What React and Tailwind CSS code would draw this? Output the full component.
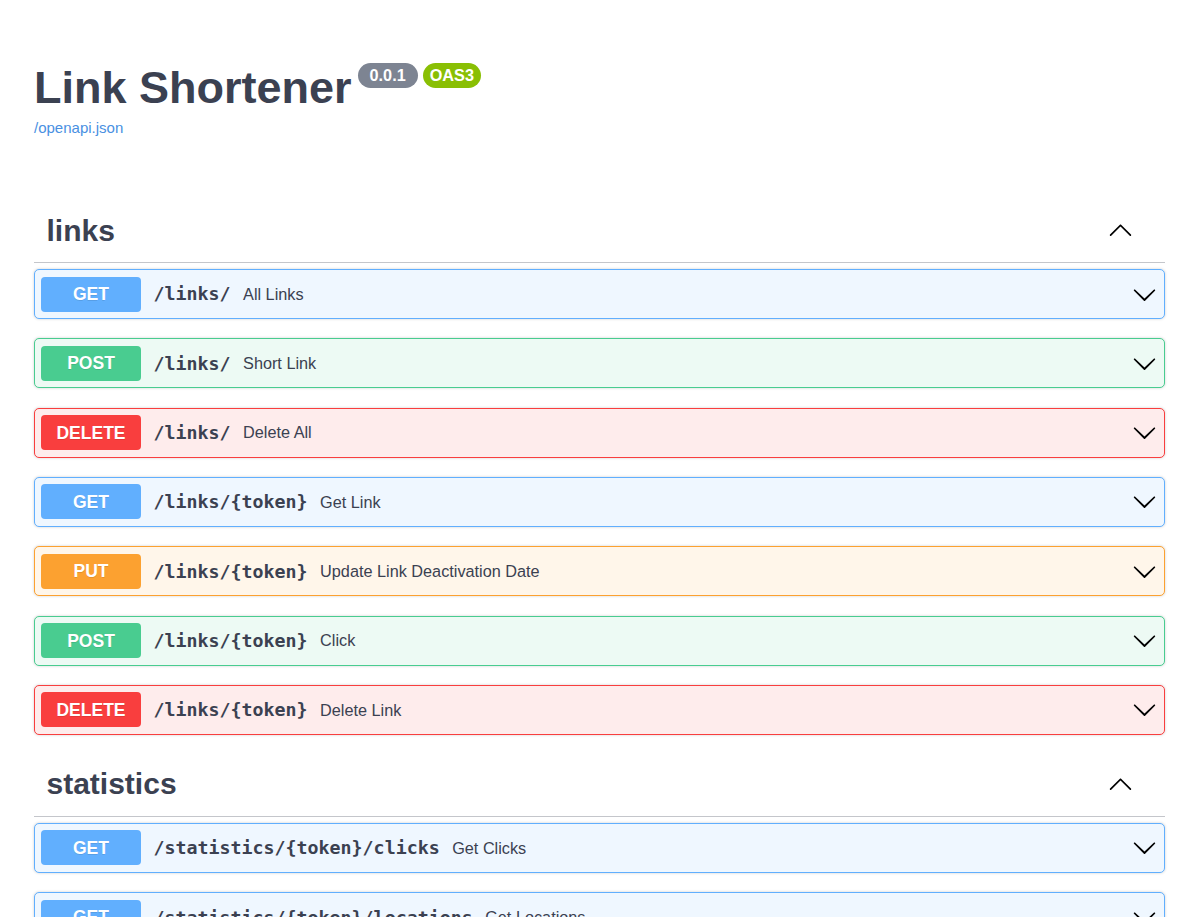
import React from "react";

const METHODS = {
  GET: { row: "bg-[#eff7ff] border-[#61affe]", badge: "bg-[#61affe]" },
  POST: { row: "bg-[#edfaf4] border-[#49cc90]", badge: "bg-[#49cc90]" },
  DELETE: { row: "bg-[#feecec] border-[#f93e3e]", badge: "bg-[#f93e3e]" },
  PUT: { row: "bg-[#fff6ea] border-[#fca130]", badge: "bg-[#fca130]" },
};

function ArrowDown() {
  return (
    <svg width="25" height="25" viewBox="0 0 20 20" className="shrink-0">
      <path
        fill="#000"
        d="M17.418 6.109c.272-.268.709-.268.979 0s.271.701 0 .969l-7.908 7.83c-.27.268-.707.268-.979 0l-7.908-7.83c-.27-.268-.27-.701 0-.969.271-.268.709-.268.979 0L10 13.25l7.418-7.141z"
      />
    </svg>
  );
}

function ArrowUp() {
  return (
    <svg width="25" height="25" viewBox="0 0 20 20" className="shrink-0">
      <path
        fill="#000"
        d="M17.418 14.908c.272.268.709.268.979 0s.271-.701 0-.969l-7.908-7.83c-.27-.268-.707-.268-.979 0l-7.908 7.83c-.27.268-.27.701 0 .969.271.268.709.268.979 0L10 7.603l7.418 7.305z"
      />
    </svg>
  );
}

function Op({ method, path, desc }) {
  const m = METHODS[method];
  return (
    <div
      className={`flex h-[50px] items-center rounded-[5px] border pl-[6px] pr-[7px] shadow-[0_0_3px_rgba(0,0,0,0.19)] ${m.row}`}
    >
      <div
        className={`flex h-[35px] w-[100px] shrink-0 items-center justify-center rounded-[4px] text-[17.5px] font-bold text-white text-shadow-[0_1px_0_rgba(0,0,0,0.1)] ${m.badge}`}
        style={{ fontFamily: '"Liberation Sans", Arial, sans-serif' }}
      >
        {method}
      </div>
      <div
        className="px-[12.5px] text-[18.3px] font-bold text-[#3b4151]"
        style={{ fontFamily: '"DejaVu Sans Mono", monospace' }}
      >
        {path}
      </div>
      <div className="flex-1 text-[16.25px] text-[#3b4151]">{desc}</div>
      <ArrowDown />
    </div>
  );
}

function Section({ title, ops, className = "" }) {
  return (
    <div className={className}>
      <div className="flex h-[60px] items-center justify-between border-b border-[#c4c6cb] pl-[12.5px] pr-[32px]">
        <h3 className="mb-[4px] text-[30px] font-bold leading-[34px] text-[#3b4151]">{title}</h3>
        <div className="mb-[6px]">
          <ArrowUp />
        </div>
      </div>
      <div className="mt-[6px] flex flex-col gap-[19.33px]">
        {ops.map((o, i) => (
          <Op key={i} {...o} />
        ))}
      </div>
    </div>
  );
}

export default function App() {
  const links = [
    { method: "GET", path: "/links/", desc: "All Links" },
    { method: "POST", path: "/links/", desc: "Short Link" },
    { method: "DELETE", path: "/links/", desc: "Delete All" },
    { method: "GET", path: "/links/{token}", desc: "Get Link" },
    { method: "PUT", path: "/links/{token}", desc: "Update Link Deactivation Date" },
    { method: "POST", path: "/links/{token}", desc: "Click" },
    { method: "DELETE", path: "/links/{token}", desc: "Delete Link" },
  ];
  const stats = [
    { method: "GET", path: "/statistics/{token}/clicks", desc: "Get Clicks" },
    { method: "GET", path: "/statistics/{token}/locations", desc: "Get Locations" },
  ];
  return (
    <div
      className="h-[917px] overflow-hidden bg-white pl-[34px] pr-[32px] pt-[63px]"
      style={{ fontFamily: '"Liberation Sans", Arial, sans-serif' }}
    >
      <div className="flex items-start">
        <h2 className="text-[45px] font-bold leading-[50px] text-[#3b4151]">Link Shortener</h2>
        <span className="ml-[6px] mt-[0px] flex h-[25px] items-center rounded-full bg-[#7d8492] px-[12px] text-[16.25px] font-bold text-white">
          0.0.1
        </span>
        <span className="ml-[5px] mt-[0px] flex h-[25px] items-center rounded-full bg-[#89bf04] px-[7px] text-[16.25px] font-bold text-white">
          OAS3
        </span>
      </div>
      <div className="mt-[6px] text-[15px] leading-[17px] text-[#4990e2]">/openapi.json</div>
      <Section className="mt-[67px]" title="links" ops={links} />
      <Section className="mt-[22px]" title="statistics" ops={stats} />
    </div>
  );
}
